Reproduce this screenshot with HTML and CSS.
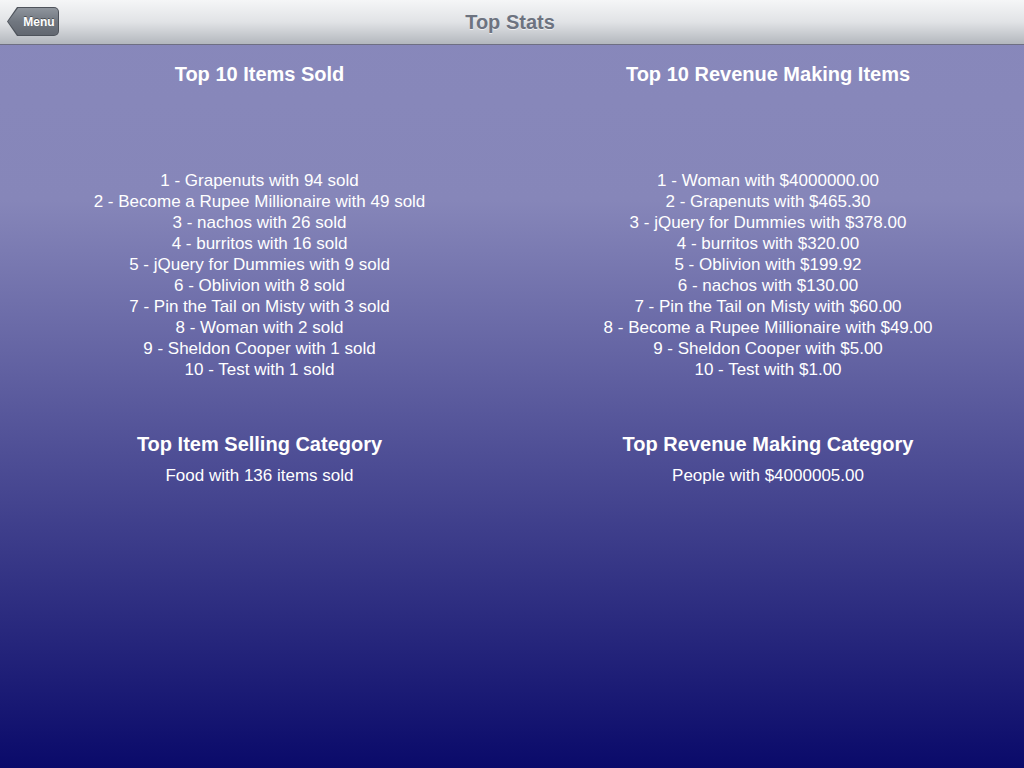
FILE: index.html
```html
<!DOCTYPE html>
<html>
<head>
<meta charset="utf-8">
<link rel="stylesheet" href="styles.css">
</head>
<body>
<header class="navbar">
  <button class="back-btn"><span class="back-label">Menu</span></button>
  <h1 class="nav-title">Top Stats</h1>
</header>
<main class="stats">
  <section class="panel panel-left">
    <h2 class="panel-title">Top 10 Items Sold</h2>
    <ul class="rank-list">
      <li>1 - Grapenuts with 94 sold</li>
      <li>2 - Become a Rupee Millionaire with 49 sold</li>
      <li>3 - nachos with 26 sold</li>
      <li>4 - burritos with 16 sold</li>
      <li>5 - jQuery for Dummies with 9 sold</li>
      <li>6 - Oblivion with 8 sold</li>
      <li>7 - Pin the Tail on Misty with 3 sold</li>
      <li>8 - Woman with 2 sold</li>
      <li>9 - Sheldon Cooper with 1 sold</li>
      <li>10 - Test with 1 sold</li>
    </ul>
  </section>
  <section class="panel">
    <h2 class="panel-title">Top 10 Revenue Making Items</h2>
    <ul class="rank-list">
      <li>1 - Woman with $4000000.00</li>
      <li>2 - Grapenuts with $465.30</li>
      <li>3 - jQuery for Dummies with $378.00</li>
      <li>4 - burritos with $320.00</li>
      <li>5 - Oblivion with $199.92</li>
      <li>6 - nachos with $130.00</li>
      <li>7 - Pin the Tail on Misty with $60.00</li>
      <li>8 - Become a Rupee Millionaire with $49.00</li>
      <li>9 - Sheldon Cooper with $5.00</li>
      <li>10 - Test with $1.00</li>
    </ul>
  </section>
  <section class="panel panel-left category">
    <h2 class="panel-title">Top Item Selling Category</h2>
    <p class="category-text">Food with 136 items sold</p>
  </section>
  <section class="panel category">
    <h2 class="panel-title">Top Revenue Making Category</h2>
    <p class="category-text">People with $4000005.00</p>
  </section>
</main>
</body>
</html>
```
FILE: styles.css
```css
html, body {
  margin: 0;
  padding: 0;
  height: 100%;
}
body {
  font-family: "Liberation Sans", Arial, Helvetica, sans-serif;
  color: #ffffff;
  background: linear-gradient(to bottom, #8888bb 0px, #8686b9 200px, #0a0a6a 768px);
  min-height: 768px;
  overflow: hidden;
}
.navbar {
  position: relative;
  height: 44px;
  border-bottom: 1px solid #6e6f82;
  background: linear-gradient(to bottom, #f5f6f7 0%, #e1e3e6 50%, #b3b7bd 100%);
  display: flex;
  align-items: center;
  justify-content: center;
}
.nav-title {
  margin: 0 4px 0 0;
  font-size: 20px;
  font-weight: bold;
  color: #6d7380;
  text-shadow: 0 1px 0 rgba(255,255,255,0.6);
}
.back-btn {
  position: absolute;
  left: 7px;
  top: 7px;
  height: 29px;
  width: 52px;
  padding: 0 0 0 12px;
  border: none;
  background: #4e535b;
  clip-path: polygon(10px 0, 100% 0, 100% 100%, 10px 100%, 0 50%);
  border-radius: 0 5px 5px 0;
  font-family: inherit;
  cursor: pointer;
}
.back-btn::before {
  content: "";
  position: absolute;
  left: 1px;
  top: 1px;
  right: 1px;
  bottom: 1px;
  background: linear-gradient(to bottom, #8f959d 0%, #717780 50%, #626770 100%);
  clip-path: polygon(10px 0, 100% 0, 100% 100%, 10px 100%, 0 50%);
  border-radius: 0 4px 4px 0;
}
.back-label {
  position: relative;
  font-size: 12px;
  font-weight: bold;
  color: #ffffff;
  text-shadow: 0 -1px 0 rgba(0,0,0,0.4);
}
.stats {
  display: grid;
  grid-template-columns: 1fr 1fr;
  padding-top: 17px;
}
.panel {
  text-align: center;
}
.panel-left {
  padding-left: 7px;
}
.panel-title {
  margin: 0;
  font-size: 20px;
  line-height: 24px;
  font-weight: bold;
}
.rank-list {
  list-style: none;
  margin: 84px 0 0;
  padding: 0;
  font-size: 17px;
  line-height: 21px;
}
.category {
  padding-top: 52px;
}
.category-text {
  margin: 9px 0 0;
  font-size: 17px;
  line-height: 21px;
}
```
